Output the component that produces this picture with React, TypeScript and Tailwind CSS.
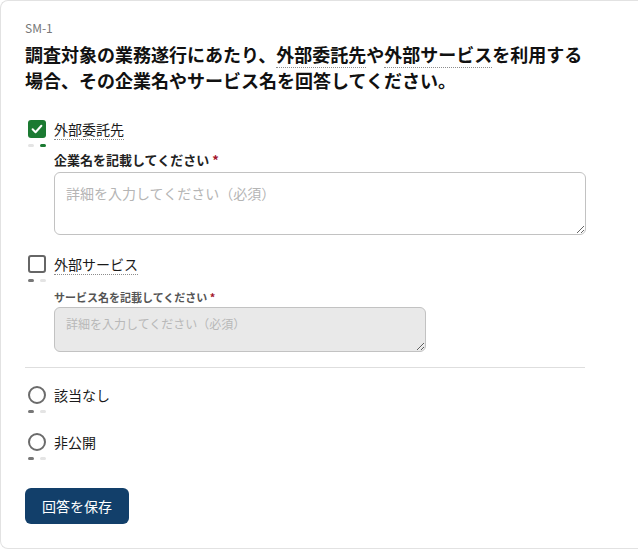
import React from 'react';

const FONT = { fontFamily: '"Noto Sans CJK JP", "Noto Sans", sans-serif' };

function Dots({ state }: { state: 'checked' | 'idle' }) {
  return (
    <div className="flex h-[3px] gap-[6px] mt-[5px] ml-[3px]">
      <span className={`w-[6px] h-[3px] rounded-full ${state === 'checked' ? 'bg-[#e4e4e4]' : 'bg-[#777]'}`} />
      <span className={`w-[6px] h-[3px] rounded-full ${state === 'checked' ? 'bg-[#1b7a32]' : 'bg-[#e4e4e4]'}`} />
    </div>
  );
}

function Term({ children }: { children: React.ReactNode }) {
  return <span className="border-b border-dotted border-[#8c8c8c]">{children}</span>;
}

function CheckBox({ checked }: { checked: boolean }) {
  return checked ? (
    <span className="w-[18px] h-[18px] rounded-[3px] bg-[#1b7a32] flex items-center justify-center shrink-0">
      <svg width="14" height="14" viewBox="0 0 24 24" fill="none" stroke="#fff" strokeWidth="3.4" strokeLinecap="round" strokeLinejoin="round">
        <path d="M4.5 12.5l5 5 10-11" />
      </svg>
    </span>
  ) : (
    <span className="w-[18px] h-[18px] rounded-[3px] border-2 border-[#666] bg-white shrink-0" />
  );
}

function Radio() {
  return <span className="w-[18px] h-[18px] rounded-full border-2 border-[#6b6b6b] bg-white shrink-0" />;
}

export default function App() {
  return (
    <div className="w-full h-[550px] bg-white text-[#1a1a1a]" style={FONT}>
      <div className="h-[549px] border border-r-0 border-[#e2e2e2] rounded-l-lg pl-6 pt-[19px]">
        <div className="h-4 text-xs leading-4 text-[#777]">SM-1</div>
        <h1 className="mt-[5px] h-[52px] w-[560px] text-lg leading-[26px] font-bold text-[#111]">
          調査対象の業務遂行にあたり、<Term>外部委託先</Term>や<Term>外部サービス</Term>を利用する場合、その企業名やサービス名を回答してください。
        </h1>

        <div className="mt-[26px] w-[560px]">
          <label className="flex h-5 items-center gap-[8px] pl-[3px] text-sm leading-5">
            <CheckBox checked />
            <Term>外部委託先</Term>
          </label>
          <Dots state="checked" />
          <div className="pl-[29px] mt-[4px]">
            <div className="h-[18px] text-[13px] leading-[18px] font-bold text-[#222]">
              企業名を記載してください <span className="text-[#a3162b]">*</span>
            </div>
            <textarea
              className="mt-[3px] block w-[532px] h-[63px] border border-[#c2c2c2] rounded-md px-[11px] py-[10px] text-sm leading-5 placeholder:text-[#b5b5b5] outline-none"
              placeholder="詳細を入力してください（必須）"
            />
          </div>

          <label className="mt-[19px] flex h-5 items-center gap-[8px] pl-[3px] text-sm leading-5">
            <CheckBox checked={false} />
            <Term>外部サービス</Term>
          </label>
          <Dots state="idle" />
          <div className="pl-[29px] mt-[7px]">
            <div className="h-4 text-[11px] leading-4 font-bold text-[#555]">
              サービス名を記載してください <span className="text-[#a3162b]">*</span>
            </div>
            <textarea
              disabled
              className="mt-[2px] block w-[372px] h-[45px] border border-[#c2c2c2] bg-[#e9e9e9] rounded-md px-[11px] py-[6px] text-xs leading-5 placeholder:text-[#b8b8b8] outline-none"
              placeholder="詳細を入力してください（必須）"
            />
          </div>

          <div className="mt-[15px] h-px bg-[#dedede]" />

          <label className="mt-[17px] flex h-5 items-center gap-[8px] pl-[3px] text-sm leading-5">
            <Radio />
            <span>該当なし</span>
          </label>
          <Dots state="idle" />

          <label className="mt-[19px] flex h-5 items-center gap-[8px] pl-[3px] text-sm leading-5">
            <Radio />
            <span>非公開</span>
          </label>
          <Dots state="idle" />

          <button className="mt-[28px] block w-[104px] h-9 rounded-md bg-[#123f6a] text-white text-sm">
            回答を保存
          </button>
        </div>
      </div>
    </div>
  );
}
